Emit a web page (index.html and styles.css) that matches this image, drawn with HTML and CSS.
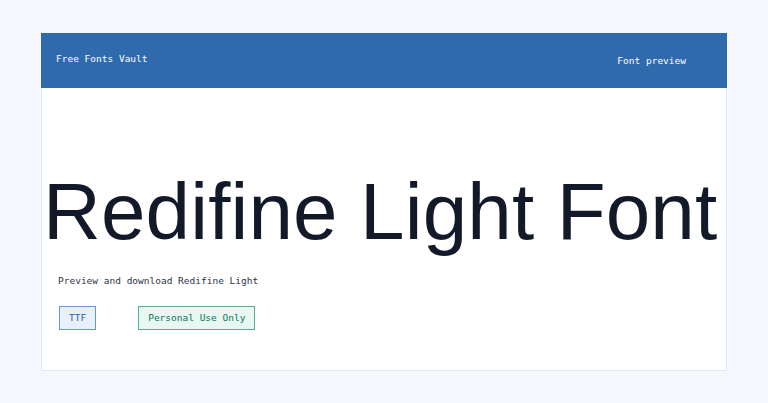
FILE: index.html
```html
<!DOCTYPE html>
<html lang="en">
<head>
    <meta charset="UTF-8">
    <meta name="viewport" content="width=device-width, initial-scale=1.0">
    <title>Redifine Light Font</title>
    <link rel="stylesheet" href="styles.css">
</head>
<body>

    <!-- Tarjeta principal -->
    <div class="card">

        <!-- Barra superior -->
        <header class="topbar">
            <span class="brand">Free Fonts Vault</span>
            <span class="nav">Font preview</span>
        </header>

        <!-- Vista previa -->
        <main class="preview">
            <h1 class="title">Redifine Light Font</h1>
            <p class="subtitle">Preview and download Redifine Light</p>
            <div class="tags">
                <span class="tag tag-format">TTF</span>
                <span class="tag tag-license">Personal Use Only</span>
            </div>
        </main>

    </div>

</body>
</html>
```

FILE: styles.css
```css
/* Estilos globales */
* {
    margin: 0;
    padding: 0;
    box-sizing: border-box;
}

body, html {
    height: 100%;
    background-color: #f5f9ff;
    font-family: 'DejaVu Sans Mono', monospace;
}

/* Tarjeta */
.card {
    margin: 33px 41px;
    height: 338px;
    background-color: #ffffff;
    border: 1px solid #e2e8f1;
}

/* Barra superior */
.topbar {
    display: flex;
    justify-content: space-between;
    align-items: center;
    height: 55px;
    margin: -1px -1px 0 -1px;
    padding: 0 40px 0 15px;
    background-color: #2f6bac;
    color: #ffffff;
    font-size: 9.5px;
}

.brand {
    margin-top: -4px;
}

.nav {
    margin-top: -1px;
    margin-right: 1px;
}

/* Vista previa */
.preview {
    padding: 79px 16px 0 16px;
}

.title {
    margin: 0 -16px 0 -15px;
    font-family: 'Liberation Sans', Arial, sans-serif;
    font-size: 80px;
    font-weight: 400;
    line-height: 90px;
    letter-spacing: 0.15px;
    color: #121a2a;
    white-space: nowrap;
}

.subtitle {
    margin-top: 18px;
    font-size: 9.5px;
    color: #2b3445;
}

.tags {
    display: flex;
    gap: 42px;
    margin-top: 20px;
    margin-left: 1px;
}

.tag {
    padding: 5px 9px;
    font-size: 9.5px;
    line-height: 12px;
    border: 1px solid;
}

.tag-format {
    background-color: #e7f0fc;
    border-color: #6a97d0;
    color: #2d5d9a;
}

.tag-license {
    background-color: #e7f7f2;
    border-color: #5ea897;
    color: #10735a;
}
```
